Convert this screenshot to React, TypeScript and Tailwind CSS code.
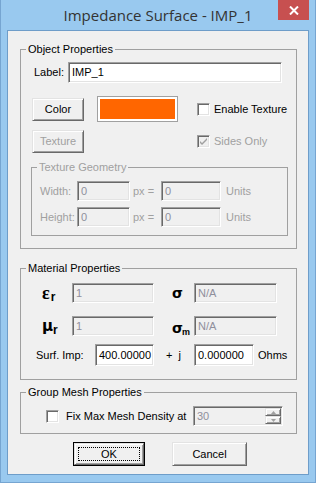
import React from "react";

const sunken =
  "border border-t-[#a0a0a0] border-l-[#a0a0a0] border-r-white border-b-white shadow-[inset_1px_1px_0_#696969,inset_-1px_-1px_0_#e3e3e3]";

const raised =
  "border border-t-[#e3e3e3] border-l-[#e3e3e3] border-r-[#696969] border-b-[#696969] shadow-[inset_1px_1px_0_white,inset_-1px_-1px_0_#a0a0a0]";

function Field({
  w,
  h = "h-[20px]",
  value,
  disabled = false,
}: {
  w: string;
  h?: string;
  value: string;
  disabled?: boolean;
}) {
  return (
    <div
      className={`${w} ${h} ${sunken} flex items-center px-[3px] ${
        disabled ? "bg-[#f0f0f0] text-[#8f8f9c]" : "bg-white text-black"
      }`}
    >
      {value}
    </div>
  );
}

function Button({
  w,
  label,
  disabled = false,
}: {
  w: string;
  label: string;
  disabled?: boolean;
}) {
  return (
    <div
      className={`${w} h-[23px] ${raised} bg-[#f0f0f0] flex items-center justify-center ${
        disabled ? "text-[#a0a0a0]" : "text-black"
      }`}
    >
      {label}
    </div>
  );
}

function Check({ checked = false, disabled = false }: { checked?: boolean; disabled?: boolean }) {
  return (
    <div
      className={`w-[13px] h-[13px] shrink-0 ${sunken} flex items-center justify-center ${
        disabled ? "bg-[#f0f0f0]" : "bg-white"
      }`}
    >
      {checked && (
        <svg width="9" height="9" viewBox="0 0 9 9">
          <path d="M1 4 L3 6 L8 1 L8 3 L3 8 L1 6 Z" fill={disabled ? "#a0a0a0" : "#000"} />
        </svg>
      )}
    </div>
  );
}

function Group({
  title,
  disabled = false,
  className,
  children,
}: {
  title: string;
  disabled?: boolean;
  className: string;
  children: React.ReactNode;
}) {
  return (
    <fieldset className={`border border-[#a0a0a0] ${className}`}>
      <legend
        className={`ml-[5px] px-[2px] leading-[13px] ${disabled ? "text-[#a0a0a0]" : "text-black"}`}
      >
        {title}
      </legend>
      {children}
    </fieldset>
  );
}

export default function App() {
  return (
    <div className="w-[316px] h-[483px] bg-[#99c9ef] border-x border-b border-[#76a5d1] flex flex-col font-['Liberation_Sans',Arial,sans-serif] text-[11px] text-black">
      {/* title bar */}
      <div className="h-[30px] flex items-start shrink-0">
        <div className="w-[37px] shrink-0" />
        <div className="flex-1 h-[30px] flex items-center justify-center text-[15px] text-[#333333] font-['Open_Sans',sans-serif]">
          Impedance Surface - IMP_1
        </div>
        <div className="w-[31px] h-[20px] bg-[#c75050] flex items-center justify-center mr-[6px] shrink-0">
          <svg width="10" height="9" viewBox="0 0 10 9">
            <path d="M1 0.5 L9 8.5 M9 0.5 L1 8.5" stroke="white" strokeWidth="2" />
          </svg>
        </div>
      </div>

      {/* client area */}
      <div className="ml-[6px] mr-[6px] mb-[7px] flex-1 border border-[#6e9dc9] bg-[#f0f0f0] flex flex-col">
        {/* Object Properties */}
        <Group title="Object Properties" className="mt-[12px] ml-[12px] w-[277px] pb-[12px]">
          <div className="pl-[10px] flex flex-col">
            <div className="mt-[6px] flex items-center">
              <span className="ml-[3px] w-[34px]">Label:</span>
              <Field w="w-[214px]" h="h-[21px]" value="IMP_1" />
            </div>

            <div className="mt-[13px] h-[26px] flex items-center">
              <div className="ml-[1px]">
                <Button w="w-[52px]" label="Color" />
              </div>
              <div className="ml-[13px] w-[81px] h-[26px] border border-[#a0a0a0] shadow-[inset_0_0_0_1px_white] bg-white p-[2px]">
                <div className="w-full h-full bg-[#ff6600]" />
              </div>
              <div className="ml-[19px]">
                <Check />
              </div>
              <span className="ml-[4px]">Enable Texture</span>
            </div>

            <div className="mt-[8px] flex items-center">
              <div className="ml-[1px]">
                <Button w="w-[52px]" label="Texture" disabled />
              </div>
              <div className="ml-[113px]">
                <Check checked disabled />
              </div>
              <span className="ml-[4px] text-[#a0a0a0]">Sides Only</span>
            </div>

            <Group title="Texture Geometry" disabled className="mt-[8px] w-[257px] pb-[8px]">
              <div className="pl-[8px] flex flex-col text-[#a0a0a0]">
                <div className="mt-[7px] flex items-center">
                  <span className="w-[37px]">Width:</span>
                  <Field w="w-[53px]" value="0" disabled />
                  <span className="ml-[3px] w-[28px]">px =</span>
                  <Field w="w-[60px]" value="0" disabled />
                  <span className="ml-[5px]">Units</span>
                </div>
                <div className="mt-[6px] flex items-center">
                  <span className="w-[37px]">Height:</span>
                  <Field w="w-[53px]" value="0" disabled />
                  <span className="ml-[3px] w-[28px]">px =</span>
                  <Field w="w-[60px]" value="0" disabled />
                  <span className="ml-[5px]">Units</span>
                </div>
              </div>
            </Group>
          </div>
        </Group>

        {/* Material Properties */}
        <Group title="Material Properties" className="mt-[13px] ml-[12px] w-[277px] pb-[13px]">
          <div className="pl-[15px] flex flex-col">
            <div className="mt-[8px] flex items-center">
              <div className="w-[36px] pl-[6px] flex items-end">
                <span className="font-['Liberation_Serif',serif] font-bold text-[18px] leading-[16px]">ε</span>
                <span className="ml-[1px] font-bold text-[12px] leading-[12px] mb-[-2px]">r</span>
              </div>
              <Field w="w-[82px]" value="1" disabled />
              <div className="w-[40px] pl-[18px] flex items-end">
                <span className="font-['DejaVu_Sans',sans-serif] font-bold text-[14px] leading-[14px]">σ</span>
              </div>
              <Field w="w-[83px]" value="N/A" disabled />
            </div>

            <div className="mt-[13px] flex items-center">
              <div className="w-[36px] pl-[6px] flex items-end">
                <span className="font-['DejaVu_Sans',sans-serif] font-bold text-[15px] leading-[15px]">μ</span>
                <span className="font-bold text-[12px] leading-[12px] mb-[-2px]">r</span>
              </div>
              <Field w="w-[82px]" value="1" disabled />
              <div className="w-[40px] pl-[18px] flex items-end pt-[4px]">
                <span className="font-['DejaVu_Sans',sans-serif] font-bold text-[14px] leading-[14px]">σ</span>
                <span className="font-bold text-[9px] leading-[9px] mb-[-2px] ml-[-1px]">m</span>
              </div>
              <Field w="w-[83px]" value="N/A" disabled />
            </div>

            <div className="mt-[8px] flex items-center">
              <span className="w-[59px]">Surf. Imp:</span>
              <Field w="w-[59px]" h="h-[22px]" value="400.00000" />
              <span className="w-[40px] pl-[12px]">+&nbsp;&nbsp;j</span>
              <Field w="w-[60px]" h="h-[22px]" value="0.000000" />
              <span className="ml-[4px]">Ohms</span>
            </div>
          </div>
        </Group>

        {/* Group Mesh Properties */}
        <Group title="Group Mesh Properties" className="mt-[6px] ml-[12px] w-[277px] pb-[7px]">
          <div className="pl-[25px] mt-[7px] flex items-center">
            <Check />
            <span className="ml-[7px] w-[127px]">Fix Max Mesh Density at</span>
            <div className={`w-[90px] h-[20px] ${sunken} bg-[#f0f0f0] flex items-center`}>
              <span className="flex-1 px-[3px] text-[#8f8f9c]">30</span>
              <div className="w-[17px] h-full py-[1px] pr-[1px] flex flex-col">
                <div className={`flex-1 ${raised} flex items-center justify-center`}>
                  <svg width="5" height="3" viewBox="0 0 5 3">
                    <path d="M0 3 L2.5 0 L5 3 Z" fill="#a0a0a0" />
                  </svg>
                </div>
                <div className={`flex-1 ${raised} flex items-center justify-center`}>
                  <svg width="5" height="3" viewBox="0 0 5 3">
                    <path d="M0 0 L2.5 3 L5 0 Z" fill="#a0a0a0" />
                  </svg>
                </div>
              </div>
            </div>
          </div>
        </Group>

        {/* OK / Cancel */}
        <div className="mt-[8px] pl-[65px] flex items-center">
          <div className="w-[72px] h-[24px] border border-black">
            <div className={`w-full h-full ${raised} bg-[#f0f0f0] p-[3px]`}>
              <div className="w-full h-full border border-dotted border-black flex items-center justify-center">
                OK
              </div>
            </div>
          </div>
          <div className="ml-[27px]">
            <div className={`w-[75px] h-[24px] ${raised} bg-[#f0f0f0] flex items-center justify-center`}>
              Cancel
            </div>
          </div>
        </div>
      </div>
    </div>
  );
}
